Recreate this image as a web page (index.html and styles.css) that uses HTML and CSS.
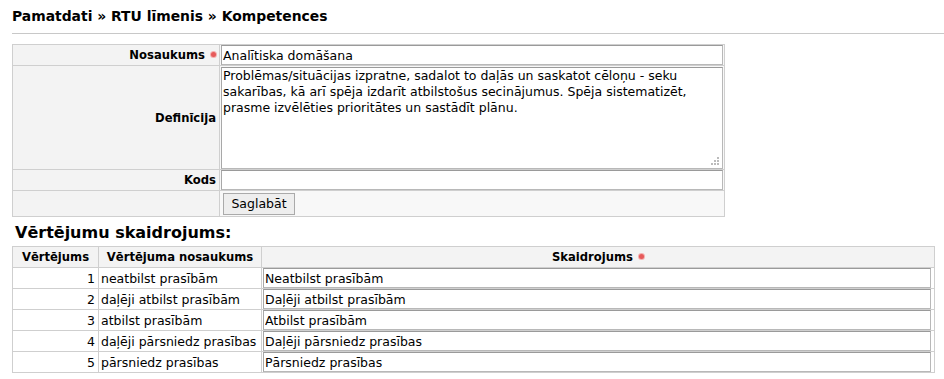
FILE: index.html
```html
<!DOCTYPE html>
<html lang="lv">
<head>
<meta charset="utf-8">
<title>Kompetences</title>
<link rel="stylesheet" href="styles.css">
</head>
<body>
<div class="page">
  <h1 class="crumbs">Pamatdati » RTU līmenis » Kompetences</h1>
  <hr class="sep">
  <table class="form">
    <tr class="r-name">
      <th class="lbl">Nosaukums <span class="req"></span></th>
      <td class="fld"><input class="txt" type="text" value="Analītiska domāšana"></td>
    </tr>
    <tr class="r-def">
      <th class="lbl">Definīcija</th>
      <td class="fld"><div class="areawrap"><textarea class="area">Problēmas/situācijas izpratne, sadalot to daļās un saskatot cēloņu - seku sakarības, kā arī spēja izdarīt atbilstošus secinājumus. Spēja sistematizēt, prasme izvēlēties prioritātes un sastādīt plānu.</textarea><span class="grip"></span></div></td>
    </tr>
    <tr class="r-code">
      <th class="lbl">Kods</th>
      <td class="fld"><input class="txt" type="text" value=""></td>
    </tr>
    <tr class="r-btn">
      <td class="lbl"></td>
      <td class="fld btncell"><button class="btn" type="button">Saglabāt</button></td>
    </tr>
  </table>
  <h2 class="sub">Vērtējumu skaidrojums:</h2>
  <table class="grid">
    <tr class="head">
      <th class="c1">Vērtējums</th>
      <th class="c2">Vērtējuma nosaukums</th>
      <th class="c3">Skaidrojums <span class="req"></span></th>
    </tr>
    <tr><td class="num">1</td><td class="nm">neatbilst prasībām</td><td class="ex"><input class="gin" type="text" value="Neatbilst prasībām"></td></tr>
    <tr><td class="num">2</td><td class="nm">daļēji atbilst prasībām</td><td class="ex"><input class="gin" type="text" value="Daļēji atbilst prasībām"></td></tr>
    <tr><td class="num">3</td><td class="nm">atbilst prasībām</td><td class="ex"><input class="gin" type="text" value="Atbilst prasībām"></td></tr>
    <tr><td class="num">4</td><td class="nm">daļēji pārsniedz prasības</td><td class="ex"><input class="gin" type="text" value="Daļēji pārsniedz prasības"></td></tr>
    <tr><td class="num">5</td><td class="nm">pārsniedz prasības</td><td class="ex"><input class="gin" type="text" value="Pārsniedz prasības"></td></tr>
  </table>
</div>
</body>
</html>
```

FILE: styles.css
```css
html, body {
  margin: 0;
  padding: 0;
  background: #fff;
}
body {
  font-family: "DejaVu Sans", Verdana, sans-serif;
  font-size: 12.5px;
  color: #000;
}
.page {
  padding: 8px 0 0 12px;
}
.crumbs {
  margin: 0;
  font-size: 13.9px;
  font-weight: bold;
  line-height: 17px;
  color: #000;
}
.sep {
  margin: 8px 0 10px 0;
  border: 0;
  border-top: 1px solid #c8c8c8;
  height: 0;
}
.form {
  border-collapse: collapse;
  width: 713px;
  border: 1px solid #cfcfcf;
}
.form th, .form td {
  border: 1px solid #cfcfcf;
  padding: 0;
}
.lbl {
  width: 203px;
  background: #f3f3f3;
  text-align: right;
  font-weight: bold;
  font-size: 11.6px;
  padding-right: 3px !important;
  vertical-align: middle;
}
.fld {
  background: #f8f8f8;
  padding: 0 0 0 1px !important;
}
.r-name { height: 21px; }
.r-def { height: 104px; }
.r-code { height: 20px; }
.r-btn { height: 26px; }
.req {
  display: inline-block;
  width: 5px;
  height: 5px;
  border-radius: 50%;
  background: #e65a5a;
  box-shadow: 0 0 0 1px #f3b0b0;
  margin-left: 2px;
  vertical-align: middle;
  position: relative;
  top: -1px;
}
.txt, .area, .gin {
  font-family: "DejaVu Sans", Verdana, sans-serif;
  font-size: 12.5px;
  color: #000;
  background: #fff;
  border: 1px solid #b8b8b8;
  border-top-color: #9a9a9a;
  border-left-color: #a8a8a8;
  box-sizing: border-box;
  margin: 0;
  outline: none;
}
.txt {
  display: block;
  width: 502px;
  height: 20px;
  padding: 0 1px;
}
.areawrap {
  position: relative;
  width: 502px;
  height: 102px;
}
.area {
  display: block;
  width: 502px;
  height: 102px;
  padding: 0 1px;
  line-height: 16px;
  resize: none;
  overflow: hidden;
}
.grip {
  position: absolute;
  right: 4px;
  bottom: 4px;
  width: 8px;
  height: 8px;
  background:
    linear-gradient(#bbb, #bbb) 6px 0 / 2px 2px no-repeat,
    linear-gradient(#bbb, #bbb) 3px 3px / 2px 2px no-repeat,
    linear-gradient(#bbb, #bbb) 6px 3px / 2px 2px no-repeat,
    linear-gradient(#bbb, #bbb) 0 6px / 2px 2px no-repeat,
    linear-gradient(#bbb, #bbb) 3px 6px / 2px 2px no-repeat,
    linear-gradient(#bbb, #bbb) 6px 6px / 2px 2px no-repeat;
}
.btncell {
  vertical-align: middle;
}
.btn {
  font-family: "DejaVu Sans", Verdana, sans-serif;
  font-size: 12.5px;
  color: #000;
  background: #eeeeee;
  border: 1px solid #aaaaaa;
  height: 22px;
  width: 72px;
  padding: 0;
  margin: 0 0 0 2px;
  display: block;
}
.sub {
  margin: 6px 0 3px 3px;
  font-size: 16px;
  font-weight: bold;
  line-height: 20px;
}
.grid {
  border-collapse: collapse;
  width: 923px;
}
.grid th, .grid td {
  border: 1px solid #cfcfcf;
  padding: 0;
  height: 20px;
}
.grid .head th {
  background: #f3f3f3;
  font-weight: bold;
  font-size: 11.6px;
  text-align: center;
}
.c1 { width: 85px; }
.c2 { width: 162px; }
.num { text-align: right; padding-right: 3px !important; }
.nm { padding-left: 2px !important; white-space: nowrap; }
.ex { padding: 0 0 0 1px !important; }
.gin {
  display: block;
  width: 668px;
  height: 20px;
  padding: 0 1px;
}
```
